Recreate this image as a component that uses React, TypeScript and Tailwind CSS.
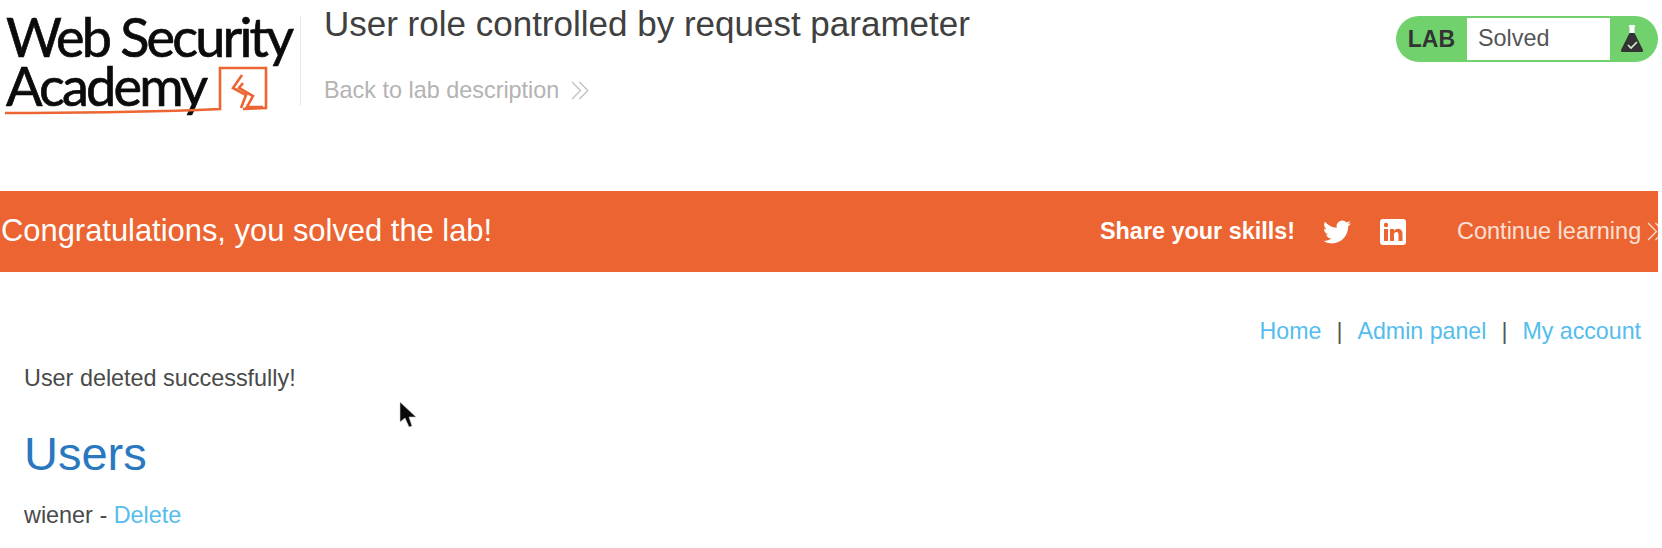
const sans = "font-['Liberation_Sans',Arial,sans-serif]";

const Logo = () => (
  <div className="relative h-[120px] w-[300px] shrink-0 overflow-hidden">
    <div className="font-['Lato',sans-serif] text-[54px] leading-[49px] tracking-[-2.8px] text-[#0b0b0b] pl-[6px] pt-[12px] [-webkit-text-stroke:0.7px_#0b0b0b]">
      <div className="whitespace-nowrap">Web Security</div>
      <div className="whitespace-nowrap">Academy</div>
    </div>
    <svg className="absolute inset-0" width="300" height="120" viewBox="0 0 300 120" fill="none" stroke="#ec6533" strokeWidth="2.6">
      <path d="M5 113 C70 113 140 112 198 110 L220 109 L220 68 L266 68 L266 108 L243 109" />
      <path d="M242 75 L233 88 L246 95 L241 108 M243 83 L239 88 L253 96 L247 107 L263 107" />
    </svg>
  </div>
);

const Flask = () => (
  <svg width="26" height="30" viewBox="0 0 26 30">
    <rect x="10" y="1" width="6" height="2" fill="#fff" />
    <rect x="10.5" y="3" width="5" height="6" fill="#fff" />
    <path d="M10.5 9 L15.5 9 L24 26 Q24.5 28 23 28 L3 28 Q1.5 28 2 26 Z" fill="#333" />
    <path d="M9 21 L12 24 L18 18" stroke="#d8f0d8" strokeWidth="1.6" fill="none" />
  </svg>
);

const Chevrons = ({ color, size = 19 }: { color: string; size?: number }) => (
  <svg width={size} height={size} viewBox="0 0 18 18" fill="none" stroke={color} strokeWidth="1.2">
    <path d="M1 1 L9 9 L1 17" />
    <path d="M8 1 L16 9 L8 17" />
  </svg>
);

const Twitter = () => (
  <svg width="28" height="28" viewBox="0 0 24 24" fill="#fff">
    <path d="M23.95 4.57a10 10 0 0 1-2.82.77 4.96 4.96 0 0 0 2.16-2.72c-.95.55-2 .96-3.13 1.18a4.92 4.92 0 0 0-8.38 4.48C7.69 8.1 4.07 6.13 1.64 3.16a4.82 4.82 0 0 0-.67 2.48c0 1.7.87 3.21 2.19 4.1a4.9 4.9 0 0 1-2.23-.61v.06a4.92 4.92 0 0 0 3.95 4.83 5 5 0 0 1-2.21.08 4.94 4.94 0 0 0 4.6 3.42A9.87 9.87 0 0 1 0 19.54a14 14 0 0 0 7.56 2.21c9.05 0 14-7.5 14-13.98 0-.21 0-.42-.02-.63a9.94 9.94 0 0 0 2.41-2.57z" />
  </svg>
);

const Linkedin = () => (
  <svg width="28" height="28" viewBox="0 0 28 28">
    <rect x="1" y="1" width="26" height="26" rx="3" fill="#fff" />
    <rect x="5" y="11" width="4" height="12" fill="#ec6431" />
    <circle cx="7" cy="7" r="2.2" fill="#ec6431" />
    <path d="M11 11h4v2c1-1.5 2.4-2.3 4-2.3 3 0 4.5 2 4.5 5V23h-4v-6.5c0-1.6-.7-2.5-2.1-2.5S15 15 15 16.5V23h-4z" fill="#ec6431" />
  </svg>
);

const Cursor = () => (
  <svg className="absolute left-[399px] top-[401px]" width="20" height="30" viewBox="0 0 20 30">
    <path d="M1 1 L1 21 L6 17 L10 26 L13 25 L10 16 L17 16 Z" fill="#0a0a0a" stroke="#ccc" strokeWidth="0.6" />
  </svg>
);

export default function App() {
  return (
    <div className={`${sans} relative h-[548px] w-[1662px] overflow-hidden bg-white text-[#4a4a4a]`}>
      <header className="flex h-[191px] items-start">
        <Logo />
        <div className="mt-[16px] h-[90px] w-px bg-[#e8e8e8]" />
        <div className="ml-[23px] flex-1">
          <h2 className="mt-[3px] text-[35px] leading-[42px] text-[#404040]">User role controlled by request parameter</h2>
          <div className="mt-[30px] flex items-center gap-[12px] text-[23.4px] leading-[30px] text-[#b3b3b3]">
            Back to lab description
            <Chevrons color="#c0c0c0" />
          </div>
        </div>
        <div className="mt-[16px] mr-[4px] flex h-[46px] w-[262px] overflow-hidden rounded-[23px] bg-[#70d16d]">
          <div className="flex w-[71px] items-center justify-end pr-[12px] text-[23px] font-bold text-[#333]">LAB</div>
          <div className="my-[2px] flex w-[143px] items-center bg-white pl-[11px] text-[23.4px] text-[#555]">Solved</div>
          <div className="flex flex-1 items-center justify-center pr-[4px]">
            <Flask />
          </div>
        </div>
      </header>
      <div className="mr-[4px] flex h-[81px] items-center bg-[#ec6431] text-white">
        <div className="flex-1 text-[30.9px] pl-[1px]">Congratulations, you solved the lab!</div>
        <div className="mr-[28px] text-[23.4px] font-bold">Share your skills!</div>
        <div className="mr-[28px]"><Twitter /></div>
        <div className="mr-[50px]"><Linkedin /></div>
        <div className="flex w-[201px] items-center gap-[6px] overflow-hidden whitespace-nowrap text-[23.5px] text-[#fbe0d5]">
          Continue learning
          <span className="shrink-0"><Chevrons color="#fbe0d5" /></span>
        </div>
      </div>
      <nav className="mt-[44px] flex justify-end pr-[21px] text-[23.2px] leading-[30px] text-[#555]">
        <a className="text-[#54bdec]">Home</a>
        <span className="mx-[15px]">|</span>
        <a className="text-[#54bdec]">Admin panel</a>
        <span className="mx-[15px]">|</span>
        <a className="text-[#54bdec]">My account</a>
      </nav>
      <main className="pl-[24px]">
        <p className="mt-[17px] text-[23.4px] leading-[30px]">User deleted successfully!</p>
        <h1 className="mt-[31px] text-[47px] leading-[60px] text-[#2a78c0]">Users</h1>
        <p className="mt-[16px] text-[23.4px] leading-[30px]">wiener - <a className="text-[#54bdec]">Delete</a></p>
      </main>
      <Cursor />
    </div>
  );
}
